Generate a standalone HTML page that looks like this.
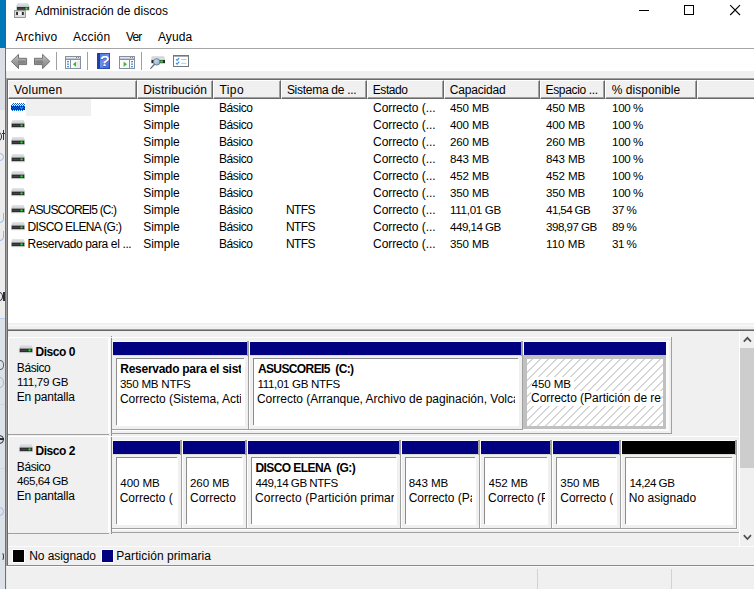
<!DOCTYPE html>
<html lang="es"><head><meta charset="utf-8"><title>Administración de discos</title>
<style>
html,body{margin:0;padding:0}
body{width:754px;height:589px;overflow:hidden;position:relative;background:#f0f0f0;font-family:"Liberation Sans", sans-serif;font-size:12px;color:#000}
.a{position:absolute}
.t{position:absolute;white-space:pre;line-height:14px;height:14px}
svg{position:absolute;overflow:visible}
.hc{position:absolute;top:80px;height:19px;box-sizing:border-box;background:#f0f0f0;border-left:1px solid #fff;border-top:1px solid #fff;border-right:1px solid #696969;border-bottom:1px solid #696969;box-shadow:inset -1px -1px 0 #a0a0a0}
</style></head><body>
<svg width="0" height="0" style="left:0;top:0"><defs>
<linearGradient id="gTop" x1="0" y1="0" x2="0" y2="1"><stop offset="0" stop-color="#e4e6e9"/><stop offset="1" stop-color="#c9cdd1"/></linearGradient>
<linearGradient id="gArr" x1="0" y1="0" x2="0" y2="1"><stop offset="0" stop-color="#c6c6c6"/><stop offset="0.55" stop-color="#9a9a9a"/><stop offset="1" stop-color="#8a8a8a"/></linearGradient>
<linearGradient id="gHelp" x1="0" y1="0" x2="1" y2="1"><stop offset="0" stop-color="#4a70dc"/><stop offset="0.5" stop-color="#6b8fea"/><stop offset="1" stop-color="#3a5fd0"/></linearGradient>
<linearGradient id="gLens" x1="0" y1="0" x2="1" y2="1"><stop offset="0" stop-color="#dbeaf8"/><stop offset="1" stop-color="#86a8d2"/></linearGradient>
<pattern id="hatch" x="5.5" y="0" width="8" height="8" patternUnits="userSpaceOnUse"><path d="M-1 9L9 -1M-1 1L1 -1M7 9L9 7" stroke="#8c8c8c" stroke-width="0.72" fill="none"/></pattern>
<pattern id="dith" width="2" height="2" patternUnits="userSpaceOnUse"><rect x="0" y="0" width="1" height="1" fill="#0a64d2"/><rect x="1" y="1" width="1" height="1" fill="#0a64d2"/></pattern>
<pattern id="dith2" width="2" height="2" patternUnits="userSpaceOnUse"><rect x="1" y="0" width="1" height="1" fill="#0a1e50"/><rect x="0" y="1" width="1" height="1" fill="#0a1e50"/></pattern><pattern id="dith3" width="2" height="2" patternUnits="userSpaceOnUse"><rect x="1" y="0" width="1" height="1" fill="#1fc02a"/><rect x="0" y="1" width="1" height="1" fill="#1fc02a"/></pattern>
<g id="drv"><path d="M1.4 0H12.6L14 3.5H0Z" fill="url(#gTop)"/><rect x="0" y="3.2" width="14" height="5" rx="0.6" fill="#d3d6d9"/><rect x="0.7" y="3.6" width="12.6" height="3.5" fill="#2c2c2c"/><rect x="1.6" y="4.9" width="7" height="0.9" fill="#4a4a4a"/><rect x="9.6" y="4.5" width="2" height="1.7" fill="#27dc33"/><rect x="10.1" y="3.9" width="1" height="2.9" fill="#1fd02a" opacity="0.5"/><rect x="9" y="4.9" width="3.2" height="0.9" fill="#1fd02a" opacity="0.5"/></g>
</defs></svg>

<div class="a" style="left:0px;top:0px;width:6px;height:48px;background:#0078b7;"></div>
<div class="a" style="left:0px;top:48px;width:5px;height:62px;background:#dcdfe3;"></div>
<div class="a" style="left:0px;top:110px;width:5px;height:208px;background:#ececec;"></div>
<div class="a" style="left:0px;top:318px;width:5px;height:271px;background:#dde1e8;"></div>
<div class="a" style="left:0px;top:318px;width:5px;height:1px;background:#b9cfee;"></div>
<div class="a" style="left:0px;top:404px;width:5px;height:1px;background:#d0d5de;"></div>
<div class="a" style="left:0px;top:468px;width:5px;height:1px;background:#d0d5de;"></div>
<div class="a" style="left:0;top:132px;width:5px;height:8.5px;overflow:hidden"><div class="a" style="left:-6px;top:0;width:8px;height:8.5px;box-sizing:border-box;border:1.4px solid #2a3350;border-radius:50%;"></div></div>
<div class="a" style="left:3px;top:130px;width:1.4px;height:10px;background:#2a3350;"></div>
<div class="a" style="left:2px;top:132.6px;width:3px;height:1.2px;background:#2a3350;"></div>
<div class="a" style="left:0;top:153px;width:5px;height:8px;overflow:hidden"><div class="a" style="left:-4px;top:0;width:8px;height:8px;box-sizing:border-box;border:1.4px solid #9db9e8;border-radius:50%;"></div></div>
<div class="a" style="left:0;top:213px;width:5px;height:9.5px;overflow:hidden"><div class="a" style="left:-4px;top:-4px;width:8px;height:13.5px;box-sizing:border-box;border:1.3px solid #94b6e8;border-radius:0 0 4px 4px"></div></div>
<div class="a" style="left:0;top:231px;width:5px;height:9.5px;overflow:hidden"><div class="a" style="left:-4px;top:-4px;width:8px;height:13.5px;box-sizing:border-box;border:1.3px solid #94b6e8;border-radius:0 0 4px 4px"></div></div>
<div class="a" style="left:0;top:292px;width:5px;height:8.5px;overflow:hidden"><div class="a" style="left:-5px;top:0;width:8px;height:8.5px;box-sizing:border-box;border:1.4px solid #2c2e36;border-radius:50%;"></div></div>
<div class="a" style="left:3.2px;top:291.5px;width:1.5px;height:9px;background:#2c2e36;"></div>
<div class="a" style="left:0;top:360px;width:5px;height:9.5px;overflow:hidden"><div class="a" style="left:-4.5px;top:0;width:8.5px;height:9.5px;box-sizing:border-box;border:1.3px solid #5a5e66;border-radius:50%;"></div></div>
<div class="a" style="left:0;top:377px;width:5px;height:10.5px;overflow:hidden"><div class="a" style="left:-5px;top:0;width:9px;height:10.5px;box-sizing:border-box;border:1.3px solid #adb9c9;border-radius:50%;"></div></div>
<div class="a" style="left:0;top:434.5px;width:5px;height:9px;overflow:hidden"><div class="a" style="left:-5px;top:0;width:9px;height:9px;box-sizing:border-box;border:1.4px solid #2c2e36;border-radius:50%;"></div></div>
<div class="a" style="left:0px;top:438.4px;width:4px;height:1.3px;background:#2c2e36;"></div>
<div class="a" style="left:0;top:507px;width:5px;height:9px;overflow:hidden"><div class="a" style="left:-5.5px;top:0;width:9px;height:9px;box-sizing:border-box;border:1.4px solid #a5bbdd;border-radius:50%;"></div></div>
<div class="a" style="left:0;top:552px;width:5px;height:9px;overflow:hidden"><div class="a" style="left:-2px;top:0;width:6px;height:9px;box-sizing:border-box;border:1.4px solid #27304c;border-radius:50%;border-left-color:transparent;border-top-color:transparent;border-bottom-color:transparent;"></div></div>
<div class="a" style="left:5px;top:48px;width:1px;height:541px;background:#2b80d8;"></div>
<div class="a" style="left:6px;top:48px;width:1px;height:541px;background:#e6e6e6;"></div>
<div class="a" style="left:6px;top:0px;width:748px;height:48px;background:#fff;"></div>
<svg style="left:14px;top:2px" width="16" height="16" viewBox="0 0 16 16">
<path d="M3.7 1H13.9L15.7 4.4H2.2Z" fill="url(#gTop)"/>
<rect x="2.2" y="4" width="13.5" height="4.7" rx="0.7" fill="#c6c9ce"/>
<rect x="3" y="5" width="11.9" height="2.8" fill="#2a2a2a"/>
<rect x="3.6" y="5.9" width="7" height="0.8" fill="#4c4c4c"/>
<circle cx="12.5" cy="6.4" r="1.7" fill="#1fae2a" opacity="0.45"/>
<circle cx="12.5" cy="6.4" r="1" fill="#35ea45"/>
<rect x="0.5" y="8.6" width="10.9" height="6.9" fill="#dcdcdc" stroke="#8e8e8e" stroke-width="0.9"/>
<rect x="4.2" y="10" width="3.4" height="3.2" fill="#f3f3f3"/>
<rect x="2.1" y="9.9" width="1.9" height="3.1" fill="#2c2c2c"/>
<rect x="7.9" y="9.9" width="1.9" height="3.1" fill="#2c2c2c"/>
</svg>
<svg style="left:630px;top:0" width="124" height="24" viewBox="0 0 124 24" shape-rendering="crispEdges">
<rect x="9" y="10" width="10" height="1" fill="#000"/>
<rect x="54.5" y="5.5" width="9" height="9" fill="none" stroke="#000" stroke-width="1"/>
<path d="M100.2 5.2L110 15M110 5.2L100.2 15" stroke="#000" stroke-width="1.1" fill="none" shape-rendering="geometricPrecision"/>
</svg>
<div class="a" style="left:6px;top:48px;width:748px;height:1px;background:#a6a6a6;"></div>
<div class="a" style="left:6px;top:49px;width:748px;height:22px;background:#fff;"></div>
<svg style="left:0;top:0" width="60" height="75" viewBox="0 0 60 75">
<path d="M11.3 61.4L18.5 54.4V58.3H26.6V64.6H18.5V68.6Z" fill="url(#gArr)" stroke="#727272" stroke-width="1" stroke-linejoin="round"/>
<path d="M49.9 61.4L42.6 54.4V58.3H34.5V64.6H42.6V68.6Z" fill="url(#gArr)" stroke="#727272" stroke-width="1" stroke-linejoin="round"/>
<path d="M18 60.4H25.4V63.6H18Z" fill="#6c6c6c" opacity="0.5"/>
<path d="M35.6 60.4H43V63.6H35.6Z" fill="#6c6c6c" opacity="0.5"/>
</svg>
<div class="a" style="left:56px;top:52px;width:1px;height:18px;background:#a0a0a0;"></div>
<svg style="left:65px;top:56px" width="16" height="13" viewBox="0 0 16 13" shape-rendering="crispEdges"><rect x="0.5" y="0.5" width="15" height="12" fill="#fdfdfd" stroke="#8790a0"/><rect x="1" y="1" width="14" height="1" fill="#e4e7ea"/><rect x="1" y="2" width="14" height="1" fill="#c3c8cf"/><rect x="1" y="3" width="14" height="1" fill="#8790a0"/><rect x="11" y="1" width="1" height="1" fill="#7a828e"/><rect x="13" y="1" width="1" height="1" fill="#7a828e"/><rect x="5" y="4" width="1" height="8" fill="#8790a0"/><rect x="2" y="5" width="2" height="1.3" fill="#4d8fe3" shape-rendering="geometricPrecision"/><rect x="2" y="7.5" width="2" height="1.3" fill="#4d8fe3" shape-rendering="geometricPrecision"/><rect x="2" y="10" width="2" height="1.3" fill="#4d8fe3" shape-rendering="geometricPrecision"/><rect x="12.4" y="5" width="2.2" height="6.6" fill="#ececec"/><path d="M11.2 5.6L7.8 8.3L11.2 11Z" fill="#43b443" shape-rendering="geometricPrecision"/></svg>
<div class="a" style="left:87px;top:52px;width:1px;height:18px;background:#a0a0a0;"></div>
<svg style="left:97px;top:53px" width="13" height="16" viewBox="0 0 13 16"><rect x="0" y="0" width="13" height="16" fill="url(#gHelp)"/><rect x="0" y="0" width="3" height="16" fill="#1d3fa6"/><rect x="0.4" y="0.4" width="12.2" height="15.2" fill="none" stroke="#2443a8" stroke-width="0.8"/></svg>
<div class="t" style="left:98.5px;top:52.6px;width:12px;height:16px;line-height:16px;text-align:center;font-size:15.5px;color:#fff;text-shadow:0.4px 0 0 #fff,0 1px 1px rgba(20,40,120,.6)">?</div>
<svg style="left:119px;top:56px" width="16" height="13" viewBox="0 0 16 13" shape-rendering="crispEdges"><rect x="0.5" y="0.5" width="15" height="12" fill="#fdfdfd" stroke="#8790a0"/><rect x="1" y="1" width="14" height="1" fill="#e4e7ea"/><rect x="1" y="2" width="14" height="1" fill="#c3c8cf"/><rect x="1" y="3" width="14" height="1" fill="#8790a0"/><rect x="11" y="1" width="1" height="1" fill="#7a828e"/><rect x="13" y="1" width="1" height="1" fill="#7a828e"/><rect x="10" y="4" width="1" height="8" fill="#8790a0"/><rect x="12" y="5" width="2" height="1.3" fill="#4d8fe3" shape-rendering="geometricPrecision"/><rect x="12" y="7.5" width="2" height="1.3" fill="#4d8fe3" shape-rendering="geometricPrecision"/><rect x="12" y="10" width="2" height="1.3" fill="#4d8fe3" shape-rendering="geometricPrecision"/><path d="M4.6 5.6L8 8.3L4.6 11Z" fill="#43b443" shape-rendering="geometricPrecision"/></svg>
<div class="a" style="left:141px;top:52px;width:1px;height:18px;background:#a0a0a0;"></div>
<svg style="left:150px;top:55px" width="16" height="15" viewBox="0 0 16 15">
<path d="M1.9 1H13.9L15 3.6H1.1Z" fill="url(#gTop)"/>
<rect x="1.1" y="3.4" width="13.9" height="5.1" rx="0.6" fill="#cfd2d6"/>
<rect x="1.5" y="5" width="13.5" height="3.1" fill="#2b2b2b"/>
<rect x="10.3" y="5.5" width="2.5" height="2.1" fill="#2ee03c"/>
<circle cx="6.7" cy="6.9" r="3.2" fill="url(#gLens)" stroke="#6b7f96" stroke-width="1"/>
<path d="M4.3 9.5L0.7 13.4" stroke="#5e6a78" stroke-width="1.25" stroke-linecap="round"/>
</svg>
<svg style="left:173px;top:55px" width="16" height="12" viewBox="0 0 16 12">
<rect x="0.5" y="0.5" width="15" height="11" fill="#fff" stroke="#6f7882" stroke-width="1"/>
<rect x="0" y="0" width="16" height="1.6" fill="#6f7882"/>
<path d="M3 4.2L4.2 5.4L6.2 2.8M3 8L4.2 9.2L6.2 6.6" stroke="#3a94ee" stroke-width="1.2" fill="none"/>
<rect x="8" y="4" width="5.4" height="1" fill="#c2c6cb"/><rect x="8" y="7.8" width="5.4" height="1" fill="#c2c6cb"/>
</svg>
<div class="a" style="left:8px;top:80px;width:746px;height:243px;background:#fff;"></div>
<div class="a" style="left:7px;top:78px;width:747px;height:1px;background:#a0a0a0;"></div>
<div class="a" style="left:7px;top:79px;width:747px;height:1px;background:#696969;"></div>
<div class="a" style="left:6px;top:78px;width:1px;height:253px;background:#a0a0a0;"></div>
<div class="a" style="left:7px;top:79px;width:1px;height:252px;background:#696969;"></div>
<div class="hc" style="left:8px;width:129px"></div>
<div class="hc" style="left:137px;width:76px"></div>
<div class="hc" style="left:213px;width:68px"></div>
<div class="hc" style="left:281px;width:86px"></div>
<div class="hc" style="left:367px;width:77px"></div>
<div class="hc" style="left:444px;width:96px"></div>
<div class="hc" style="left:540px;width:65px"></div>
<div class="hc" style="left:605px;width:92px"></div>
<div class="hc" style="left:697px;width:64px"></div>
<div class="a" style="left:26px;top:99px;width:65px;height:17px;background:#f0f0f0;"></div>
<svg style="left:11px;top:103px" width="14" height="8" viewBox="0 0 14 8" shape-rendering="crispEdges"><path d="M1 0H13V1H14V7H13V8H1V7H0V1H1Z" fill="url(#dith)"/><rect x="0" y="3" width="14" height="4" fill="url(#dith2)"/><rect x="9" y="4" width="3" height="2" fill="url(#dith3)"/></svg>
<svg style="left:11px;top:120px" width="14" height="9" viewBox="0 0 14 9"><use href="#drv"/></svg>
<svg style="left:11px;top:137px" width="14" height="9" viewBox="0 0 14 9"><use href="#drv"/></svg>
<svg style="left:11px;top:154px" width="14" height="9" viewBox="0 0 14 9"><use href="#drv"/></svg>
<svg style="left:11px;top:171px" width="14" height="9" viewBox="0 0 14 9"><use href="#drv"/></svg>
<svg style="left:11px;top:188px" width="14" height="9" viewBox="0 0 14 9"><use href="#drv"/></svg>
<svg style="left:11px;top:205px" width="14" height="9" viewBox="0 0 14 9"><use href="#drv"/></svg>
<svg style="left:11px;top:222px" width="14" height="9" viewBox="0 0 14 9"><use href="#drv"/></svg>
<svg style="left:11px;top:239px" width="14" height="9" viewBox="0 0 14 9"><use href="#drv"/></svg>
<div class="a" style="left:8px;top:323px;width:746px;height:8px;background:#f0f0f0;"></div>
<div class="a" style="left:8px;top:325px;width:746px;height:1px;background:#fbfbfb;"></div>
<div class="a" style="left:8px;top:329px;width:746px;height:1px;background:#a2a2a2;"></div>
<div class="a" style="left:7px;top:330px;width:747px;height:1px;background:#646464;"></div>
<div class="a" style="left:6px;top:331px;width:1px;height:236px;background:#a0a0a0;"></div>
<div class="a" style="left:7px;top:331px;width:1px;height:236px;background:#696969;"></div>
<div class="a" style="left:8px;top:337px;width:100px;height:1px;background:#fff;"></div>
<div class="a" style="left:8px;top:337px;width:1px;height:96px;background:#fff;"></div>
<div class="a" style="left:108px;top:337px;width:2px;height:96px;background:#fff;"></div>
<div class="a" style="left:111px;top:336px;width:1px;height:99px;background:#8c8c8c;"></div>
<div class="a" style="left:111px;top:337px;width:1px;height:1px;background:#fff;"></div>
<div class="a" style="left:8px;top:434px;width:101px;height:1px;background:#a0a0a0;"></div>
<svg style="left:19px;top:345px" width="14" height="9" viewBox="0 0 14 9"><use href="#drv"/></svg>
<div class="a" style="left:112px;top:337px;width:559px;height:1px;background:#fff;"></div>
<div class="a" style="left:112px;top:341px;width:559px;height:1px;background:#fafafa;"></div>
<div class="a" style="left:113px;top:342px;width:134px;height:13px;background:#000080;"></div>
<div class="a" style="left:113px;top:355px;width:134px;height:1px;background:#dcdcd6;"></div>
<div class="a" style="left:247px;top:341px;width:1px;height:15px;background:#a0a0a0;"></div>
<div class="a" style="left:248px;top:341px;width:1px;height:89px;background:#a0a0a0;"></div>
<div class="a" style="left:249px;top:341px;width:1px;height:89px;background:#fff;"></div>
<div class="a" style="left:117px;top:359px;width:128px;height:67px;background:#fff;"></div>
<div class="a" style="left:116px;top:358px;width:128px;height:1px;background:#8c8c8c;"></div>
<div class="a" style="left:116px;top:358px;width:1px;height:67px;background:#8c8c8c;"></div>
<div class="a" style="left:250px;top:342px;width:271px;height:13px;background:#000080;"></div>
<div class="a" style="left:250px;top:355px;width:271px;height:1px;background:#dcdcd6;"></div>
<div class="a" style="left:521px;top:341px;width:1px;height:15px;background:#a0a0a0;"></div>
<div class="a" style="left:522px;top:341px;width:1px;height:89px;background:#a0a0a0;"></div>
<div class="a" style="left:523px;top:341px;width:1px;height:89px;background:#fff;"></div>
<div class="a" style="left:254px;top:359px;width:265px;height:67px;background:#fff;"></div>
<div class="a" style="left:253px;top:358px;width:265px;height:1px;background:#8c8c8c;"></div>
<div class="a" style="left:253px;top:358px;width:1px;height:67px;background:#8c8c8c;"></div>
<div class="a" style="left:524px;top:342px;width:142px;height:13px;background:#000080;"></div>
<div class="a" style="left:523px;top:355px;width:143px;height:74px;background:#c0c0c0;"></div>
<svg style="left:527px;top:359px" width="136" height="67" viewBox="0 0 136 67"><rect width="136" height="67" fill="#fff"/><rect width="136" height="67" fill="url(#hatch)"/></svg>
<div class="a" style="left:666px;top:341px;width:3px;height:90px;background:#fbfbfb;"></div>
<div class="a" style="left:523px;top:429px;width:144px;height:2px;background:#fbfbfb;"></div>
<div class="a" style="left:112px;top:429px;width:411px;height:1px;background:#a0a0a0;"></div>
<div class="a" style="left:112px;top:430px;width:411px;height:1px;background:#fff;"></div>
<div class="a" style="left:671px;top:337px;width:1px;height:97px;background:#a0a0a0;"></div>
<div class="a" style="left:111px;top:433px;width:561px;height:1px;background:#a0a0a0;"></div>
<div class="a" style="left:8px;top:436px;width:100px;height:1px;background:#fff;"></div>
<div class="a" style="left:8px;top:436px;width:1px;height:96px;background:#fff;"></div>
<div class="a" style="left:108px;top:436px;width:2px;height:96px;background:#fff;"></div>
<div class="a" style="left:111px;top:435px;width:1px;height:99px;background:#8c8c8c;"></div>
<div class="a" style="left:111px;top:436px;width:1px;height:1px;background:#fff;"></div>
<div class="a" style="left:8px;top:533px;width:101px;height:1px;background:#a0a0a0;"></div>
<svg style="left:19px;top:444px" width="14" height="9" viewBox="0 0 14 9"><use href="#drv"/></svg>
<div class="a" style="left:112px;top:436px;width:626px;height:1px;background:#fff;"></div>
<div class="a" style="left:112px;top:440px;width:626px;height:1px;background:#fafafa;"></div>
<div class="a" style="left:113px;top:441px;width:67px;height:13px;background:#000080;"></div>
<div class="a" style="left:113px;top:454px;width:67px;height:1px;background:#dcdcd6;"></div>
<div class="a" style="left:180px;top:440px;width:1px;height:15px;background:#a0a0a0;"></div>
<div class="a" style="left:181px;top:440px;width:1px;height:89px;background:#a0a0a0;"></div>
<div class="a" style="left:182px;top:440px;width:1px;height:89px;background:#fff;"></div>
<div class="a" style="left:117px;top:458px;width:61px;height:67px;background:#fff;"></div>
<div class="a" style="left:116px;top:457px;width:61px;height:1px;background:#8c8c8c;"></div>
<div class="a" style="left:116px;top:457px;width:1px;height:67px;background:#8c8c8c;"></div>
<div class="a" style="left:183px;top:441px;width:62px;height:13px;background:#000080;"></div>
<div class="a" style="left:183px;top:454px;width:62px;height:1px;background:#dcdcd6;"></div>
<div class="a" style="left:245px;top:440px;width:1px;height:15px;background:#a0a0a0;"></div>
<div class="a" style="left:246px;top:440px;width:1px;height:89px;background:#a0a0a0;"></div>
<div class="a" style="left:247px;top:440px;width:1px;height:89px;background:#fff;"></div>
<div class="a" style="left:187px;top:458px;width:56px;height:67px;background:#fff;"></div>
<div class="a" style="left:186px;top:457px;width:56px;height:1px;background:#8c8c8c;"></div>
<div class="a" style="left:186px;top:457px;width:1px;height:67px;background:#8c8c8c;"></div>
<div class="a" style="left:248px;top:441px;width:151px;height:13px;background:#000080;"></div>
<div class="a" style="left:248px;top:454px;width:151px;height:1px;background:#dcdcd6;"></div>
<div class="a" style="left:399px;top:440px;width:1px;height:15px;background:#a0a0a0;"></div>
<div class="a" style="left:400px;top:440px;width:1px;height:89px;background:#a0a0a0;"></div>
<div class="a" style="left:401px;top:440px;width:1px;height:89px;background:#fff;"></div>
<div class="a" style="left:252px;top:458px;width:145px;height:67px;background:#fff;"></div>
<div class="a" style="left:251px;top:457px;width:145px;height:1px;background:#8c8c8c;"></div>
<div class="a" style="left:251px;top:457px;width:1px;height:67px;background:#8c8c8c;"></div>
<div class="a" style="left:402px;top:441px;width:76px;height:13px;background:#000080;"></div>
<div class="a" style="left:402px;top:454px;width:76px;height:1px;background:#dcdcd6;"></div>
<div class="a" style="left:478px;top:440px;width:1px;height:15px;background:#a0a0a0;"></div>
<div class="a" style="left:479px;top:440px;width:1px;height:89px;background:#a0a0a0;"></div>
<div class="a" style="left:480px;top:440px;width:1px;height:89px;background:#fff;"></div>
<div class="a" style="left:406px;top:458px;width:70px;height:67px;background:#fff;"></div>
<div class="a" style="left:405px;top:457px;width:70px;height:1px;background:#8c8c8c;"></div>
<div class="a" style="left:405px;top:457px;width:1px;height:67px;background:#8c8c8c;"></div>
<div class="a" style="left:481px;top:441px;width:69px;height:13px;background:#000080;"></div>
<div class="a" style="left:481px;top:454px;width:69px;height:1px;background:#dcdcd6;"></div>
<div class="a" style="left:550px;top:440px;width:1px;height:15px;background:#a0a0a0;"></div>
<div class="a" style="left:551px;top:440px;width:1px;height:89px;background:#a0a0a0;"></div>
<div class="a" style="left:552px;top:440px;width:1px;height:89px;background:#fff;"></div>
<div class="a" style="left:485px;top:458px;width:63px;height:67px;background:#fff;"></div>
<div class="a" style="left:484px;top:457px;width:63px;height:1px;background:#8c8c8c;"></div>
<div class="a" style="left:484px;top:457px;width:1px;height:67px;background:#8c8c8c;"></div>
<div class="a" style="left:553px;top:441px;width:66px;height:13px;background:#000080;"></div>
<div class="a" style="left:553px;top:454px;width:66px;height:1px;background:#dcdcd6;"></div>
<div class="a" style="left:619px;top:440px;width:1px;height:15px;background:#a0a0a0;"></div>
<div class="a" style="left:620px;top:440px;width:1px;height:89px;background:#a0a0a0;"></div>
<div class="a" style="left:621px;top:440px;width:1px;height:89px;background:#fff;"></div>
<div class="a" style="left:557px;top:458px;width:60px;height:67px;background:#fff;"></div>
<div class="a" style="left:556px;top:457px;width:60px;height:1px;background:#8c8c8c;"></div>
<div class="a" style="left:556px;top:457px;width:1px;height:67px;background:#8c8c8c;"></div>
<div class="a" style="left:622px;top:441px;width:113px;height:13px;background:#000;"></div>
<div class="a" style="left:622px;top:454px;width:113px;height:1px;background:#dcdcd6;"></div>
<div class="a" style="left:735px;top:440px;width:1px;height:15px;background:#a0a0a0;"></div>
<div class="a" style="left:736px;top:440px;width:1px;height:89px;background:#a0a0a0;"></div>
<div class="a" style="left:737px;top:440px;width:1px;height:89px;background:#fff;"></div>
<div class="a" style="left:626px;top:458px;width:107px;height:67px;background:#fff;"></div>
<div class="a" style="left:625px;top:457px;width:107px;height:1px;background:#8c8c8c;"></div>
<div class="a" style="left:625px;top:457px;width:1px;height:67px;background:#8c8c8c;"></div>
<div class="a" style="left:112px;top:528px;width:625px;height:1px;background:#a0a0a0;"></div>
<div class="a" style="left:112px;top:529px;width:625px;height:1px;background:#fff;"></div>
<div class="a" style="left:111px;top:532px;width:628px;height:1px;background:#a0a0a0;"></div>
<div class="a" style="left:740px;top:331px;width:14px;height:215px;background:#f0f0f0;"></div>
<div class="a" style="left:739px;top:331px;width:1px;height:215px;background:#fff;"></div>
<div class="a" style="left:740px;top:348px;width:14px;height:120px;background:#cdcdcd;"></div>
<svg style="left:743px;top:336px" width="9" height="7" viewBox="0 0 9 7"><path d="M0.8 5.6L4.4 1.8L8 5.6" stroke="#505050" stroke-width="1.7" fill="none"/></svg>
<svg style="left:743px;top:534px" width="9" height="7" viewBox="0 0 9 7"><path d="M0.8 1.2L4.4 5L8 1.2" stroke="#505050" stroke-width="1.7" fill="none"/></svg>
<div class="a" style="left:8px;top:546px;width:746px;height:1px;background:#fbfbfb;"></div>
<div class="a" style="left:12px;top:549px;width:13px;height:14px;background:#fff;"></div>
<div class="a" style="left:13px;top:550px;width:11px;height:12px;background:#000;"></div>
<div class="a" style="left:101px;top:549px;width:13px;height:14px;background:#fff;"></div>
<div class="a" style="left:102px;top:550px;width:11px;height:12px;background:#000080;"></div>
<div class="a" style="left:6px;top:565px;width:748px;height:1px;background:#8a8a8a;"></div>
<div class="a" style="left:6px;top:566px;width:748px;height:1px;background:#fbfbfb;"></div>
<div class="a" style="left:537px;top:569px;width:1px;height:20px;background:#d2d2d2;"></div>
<div class="a" style="left:671px;top:569px;width:1px;height:20px;background:#d2d2d2;"></div>
<div class="t" style="left:34.90px;top:4.40px;letter-spacing:0.012px;">Administración de discos</div>
<div class="t" style="left:15.60px;top:30.10px;letter-spacing:0.264px;">Archivo</div>
<div class="t" style="left:73.00px;top:30.10px;letter-spacing:0.234px;">Acción</div>
<div class="t" style="left:125.90px;top:30.10px;letter-spacing:-0.808px;">Ver</div>
<div class="t" style="left:157.90px;top:30.10px;letter-spacing:0.122px;">Ayuda</div>
<div class="t" style="left:14.00px;top:83.00px;letter-spacing:0.233px;">Volumen</div>
<div class="t" style="left:143.30px;top:83.00px;letter-spacing:0.091px;">Distribución</div>
<div class="t" style="left:219.40px;top:83.00px;letter-spacing:0.465px;">Tipo</div>
<div class="t" style="left:286.90px;top:83.00px;letter-spacing:-0.275px;">Sistema de ...</div>
<div class="t" style="left:372.80px;top:83.00px;letter-spacing:-0.452px;">Estado</div>
<div class="t" style="left:449.80px;top:83.00px;letter-spacing:-0.184px;">Capacidad</div>
<div class="t" style="left:545.60px;top:83.00px;letter-spacing:-0.363px;">Espacio ...</div>
<div class="t" style="left:611.80px;top:83.00px;letter-spacing:0.032px;">% disponible</div>
<div class="t" style="left:143.30px;top:101.00px;letter-spacing:-0.058px;">Simple</div>
<div class="t" style="left:219.00px;top:101.00px;letter-spacing:-0.426px;">Básico</div>
<div class="t" style="left:373.10px;top:101.00px;letter-spacing:-0.080px;">Correcto (...</div>
<div class="t" style="left:450.10px;top:101.00px;letter-spacing:-0.184px;font-size:11.6px;">450 MB</div>
<div class="t" style="left:546.10px;top:101.00px;letter-spacing:-0.184px;font-size:11.6px;">450 MB</div>
<div class="t" style="left:612.10px;top:101.00px;letter-spacing:-0.411px;font-size:11.6px;">100 %</div>
<div class="t" style="left:143.30px;top:118.00px;letter-spacing:-0.058px;">Simple</div>
<div class="t" style="left:219.00px;top:118.00px;letter-spacing:-0.426px;">Básico</div>
<div class="t" style="left:373.10px;top:118.00px;letter-spacing:-0.080px;">Correcto (...</div>
<div class="t" style="left:450.10px;top:118.00px;letter-spacing:-0.184px;font-size:11.6px;">400 MB</div>
<div class="t" style="left:546.10px;top:118.00px;letter-spacing:-0.184px;font-size:11.6px;">400 MB</div>
<div class="t" style="left:612.10px;top:118.00px;letter-spacing:-0.411px;font-size:11.6px;">100 %</div>
<div class="t" style="left:143.30px;top:135.00px;letter-spacing:-0.058px;">Simple</div>
<div class="t" style="left:219.00px;top:135.00px;letter-spacing:-0.426px;">Básico</div>
<div class="t" style="left:373.10px;top:135.00px;letter-spacing:-0.080px;">Correcto (...</div>
<div class="t" style="left:450.10px;top:135.00px;letter-spacing:-0.184px;font-size:11.6px;">260 MB</div>
<div class="t" style="left:546.10px;top:135.00px;letter-spacing:-0.184px;font-size:11.6px;">260 MB</div>
<div class="t" style="left:612.10px;top:135.00px;letter-spacing:-0.411px;font-size:11.6px;">100 %</div>
<div class="t" style="left:143.30px;top:152.00px;letter-spacing:-0.058px;">Simple</div>
<div class="t" style="left:219.00px;top:152.00px;letter-spacing:-0.426px;">Básico</div>
<div class="t" style="left:373.10px;top:152.00px;letter-spacing:-0.080px;">Correcto (...</div>
<div class="t" style="left:450.10px;top:152.00px;letter-spacing:-0.184px;font-size:11.6px;">843 MB</div>
<div class="t" style="left:546.10px;top:152.00px;letter-spacing:-0.184px;font-size:11.6px;">843 MB</div>
<div class="t" style="left:612.10px;top:152.00px;letter-spacing:-0.411px;font-size:11.6px;">100 %</div>
<div class="t" style="left:143.30px;top:169.00px;letter-spacing:-0.058px;">Simple</div>
<div class="t" style="left:219.00px;top:169.00px;letter-spacing:-0.426px;">Básico</div>
<div class="t" style="left:373.10px;top:169.00px;letter-spacing:-0.080px;">Correcto (...</div>
<div class="t" style="left:450.10px;top:169.00px;letter-spacing:-0.184px;font-size:11.6px;">452 MB</div>
<div class="t" style="left:546.10px;top:169.00px;letter-spacing:-0.184px;font-size:11.6px;">452 MB</div>
<div class="t" style="left:612.10px;top:169.00px;letter-spacing:-0.411px;font-size:11.6px;">100 %</div>
<div class="t" style="left:143.30px;top:186.00px;letter-spacing:-0.058px;">Simple</div>
<div class="t" style="left:219.00px;top:186.00px;letter-spacing:-0.426px;">Básico</div>
<div class="t" style="left:373.10px;top:186.00px;letter-spacing:-0.080px;">Correcto (...</div>
<div class="t" style="left:450.10px;top:186.00px;letter-spacing:-0.184px;font-size:11.6px;">350 MB</div>
<div class="t" style="left:546.10px;top:186.00px;letter-spacing:-0.184px;font-size:11.6px;">350 MB</div>
<div class="t" style="left:612.10px;top:186.00px;letter-spacing:-0.411px;font-size:11.6px;">100 %</div>
<div class="t" style="left:28.30px;top:203.00px;letter-spacing:-0.849px;">ASUSCOREI5 (C:)</div>
<div class="t" style="left:143.30px;top:203.00px;letter-spacing:-0.058px;">Simple</div>
<div class="t" style="left:219.00px;top:203.00px;letter-spacing:-0.426px;">Básico</div>
<div class="t" style="left:286.00px;top:203.00px;letter-spacing:-0.648px;">NTFS</div>
<div class="t" style="left:373.10px;top:203.00px;letter-spacing:-0.080px;">Correcto (...</div>
<div class="t" style="left:450.10px;top:203.00px;letter-spacing:-0.325px;font-size:11.6px;">111,01 GB</div>
<div class="t" style="left:546.10px;top:203.00px;letter-spacing:-0.621px;font-size:11.6px;">41,54 GB</div>
<div class="t" style="left:612.10px;top:203.00px;letter-spacing:-0.559px;font-size:11.6px;">37 %</div>
<div class="t" style="left:27.60px;top:220.00px;letter-spacing:-0.649px;">DISCO ELENA (G:)</div>
<div class="t" style="left:143.30px;top:220.00px;letter-spacing:-0.058px;">Simple</div>
<div class="t" style="left:219.00px;top:220.00px;letter-spacing:-0.426px;">Básico</div>
<div class="t" style="left:286.00px;top:220.00px;letter-spacing:-0.648px;">NTFS</div>
<div class="t" style="left:373.10px;top:220.00px;letter-spacing:-0.080px;">Correcto (...</div>
<div class="t" style="left:450.10px;top:220.00px;letter-spacing:-0.540px;font-size:11.6px;">449,14 GB</div>
<div class="t" style="left:546.10px;top:220.00px;letter-spacing:-0.540px;font-size:11.6px;">398,97 GB</div>
<div class="t" style="left:612.10px;top:220.00px;letter-spacing:-0.559px;font-size:11.6px;">89 %</div>
<div class="t" style="left:27.60px;top:237.00px;letter-spacing:-0.365px;">Reservado para el ...</div>
<div class="t" style="left:143.30px;top:237.00px;letter-spacing:-0.058px;">Simple</div>
<div class="t" style="left:219.00px;top:237.00px;letter-spacing:-0.426px;">Básico</div>
<div class="t" style="left:286.00px;top:237.00px;letter-spacing:-0.648px;">NTFS</div>
<div class="t" style="left:373.10px;top:237.00px;letter-spacing:-0.080px;">Correcto (...</div>
<div class="t" style="left:450.10px;top:237.00px;letter-spacing:-0.184px;font-size:11.6px;">350 MB</div>
<div class="t" style="left:546.10px;top:237.00px;letter-spacing:-0.012px;font-size:11.6px;">110 MB</div>
<div class="t" style="left:612.10px;top:237.00px;letter-spacing:-0.559px;font-size:11.6px;">31 %</div>
<div class="t" style="left:35.40px;top:344.60px;letter-spacing:-0.431px;font-weight:bold;">Disco 0</div>
<div class="t" style="left:16.80px;top:360.60px;letter-spacing:-0.406px;">Básico</div>
<div class="t" style="left:17.10px;top:374.60px;letter-spacing:-0.277px;font-size:11.6px;">111,79 GB</div>
<div class="t" style="left:16.80px;top:389.60px;letter-spacing:-0.185px;">En pantalla</div>
<div class="t" style="left:120.30px;top:362.00px;letter-spacing:-0.270px;font-weight:bold;width:121.20px;overflow:hidden;">Reservado para el siste</div>
<div class="t" style="left:119.90px;top:377.00px;letter-spacing:-0.255px;font-size:11.6px;width:121.60px;overflow:hidden;">350 MB NTFS</div>
<div class="t" style="left:119.90px;top:392.00px;letter-spacing:-0.030px;width:121.60px;overflow:hidden;">Correcto (Sistema, Activ</div>
<div class="t" style="left:257.90px;top:362.00px;letter-spacing:-0.610px;font-weight:bold;width:257.10px;overflow:hidden;">ASUSCOREI5  (C:)</div>
<div class="t" style="left:257.50px;top:377.00px;letter-spacing:-0.346px;font-size:11.6px;width:257.50px;overflow:hidden;">111,01 GB NTFS</div>
<div class="t" style="left:256.90px;top:392.00px;letter-spacing:0.000px;width:258.10px;overflow:hidden;">Correcto (Arranque, Archivo de paginación, Volca</div>
<div class="t" style="left:531.60px;top:377.00px;letter-spacing:-0.114px;font-size:11.6px;background:#fff;height:15px;padding-right:3px;max-width:126.40px;overflow:hidden;">450 MB</div>
<div class="t" style="left:531.00px;top:391.30px;letter-spacing:-0.030px;background:#fff;height:15px;width:130.00px;overflow:hidden;">Correcto (Partición de re</div>
<div class="t" style="left:35.40px;top:443.60px;letter-spacing:-0.431px;font-weight:bold;">Disco 2</div>
<div class="t" style="left:16.80px;top:459.60px;letter-spacing:-0.406px;">Básico</div>
<div class="t" style="left:17.10px;top:473.60px;letter-spacing:-0.492px;font-size:11.6px;">465,64 GB</div>
<div class="t" style="left:16.80px;top:488.60px;letter-spacing:-0.185px;">En pantalla</div>
<div class="t" style="left:120.30px;top:476.00px;letter-spacing:-0.094px;font-size:11.6px;width:52.70px;overflow:hidden;">400 MB</div>
<div class="t" style="left:119.70px;top:491.00px;letter-spacing:-0.030px;width:53.30px;overflow:hidden;">Correcto (</div>
<div class="t" style="left:190.00px;top:476.00px;letter-spacing:-0.094px;font-size:11.6px;width:48.00px;overflow:hidden;">260 MB</div>
<div class="t" style="left:190.00px;top:491.00px;letter-spacing:-0.030px;width:48.00px;overflow:hidden;">Correcto (</div>
<div class="t" style="left:255.40px;top:461.00px;letter-spacing:-0.573px;font-weight:bold;width:138.60px;overflow:hidden;">DISCO ELENA  (G:)</div>
<div class="t" style="left:255.60px;top:476.00px;letter-spacing:-0.488px;font-size:11.6px;width:138.40px;overflow:hidden;">449,14 GB NTFS</div>
<div class="t" style="left:255.00px;top:491.00px;letter-spacing:0.100px;width:139.00px;overflow:hidden;">Correcto (Partición primari</div>
<div class="t" style="left:408.70px;top:476.00px;letter-spacing:-0.094px;font-size:11.6px;width:63.80px;overflow:hidden;">843 MB</div>
<div class="t" style="left:408.70px;top:491.00px;letter-spacing:-0.030px;width:63.80px;overflow:hidden;">Correcto (Pa</div>
<div class="t" style="left:488.60px;top:476.00px;letter-spacing:-0.094px;font-size:11.6px;width:55.90px;overflow:hidden;">452 MB</div>
<div class="t" style="left:488.00px;top:491.00px;letter-spacing:-0.030px;width:56.50px;overflow:hidden;">Correcto (P</div>
<div class="t" style="left:560.30px;top:476.00px;letter-spacing:-0.094px;font-size:11.6px;width:52.90px;overflow:hidden;">350 MB</div>
<div class="t" style="left:560.30px;top:491.00px;letter-spacing:-0.030px;width:52.90px;overflow:hidden;">Correcto (</div>
<div class="t" style="left:629.40px;top:476.00px;letter-spacing:-0.500px;font-size:11.6px;width:100.60px;overflow:hidden;">14,24 GB</div>
<div class="t" style="left:628.80px;top:491.00px;letter-spacing:0.001px;width:101.20px;overflow:hidden;">No asignado</div>
<div class="t" style="left:29.20px;top:549.00px;letter-spacing:-0.059px;">No asignado</div>
<div class="t" style="left:116.30px;top:549.00px;letter-spacing:0.072px;">Partición primaria</div>
</body></html>
